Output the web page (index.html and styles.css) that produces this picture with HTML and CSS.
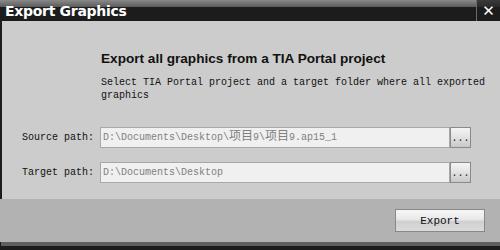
FILE: index.html
```html
<!DOCTYPE html>
<html lang="en">
<head>
    <meta charset="UTF-8">
    <title>Export Graphics</title>
    <link rel="stylesheet" href="styles.css">
</head>
<body>
    <div class="window">
        <div class="titlebar">
            <div class="title">Export Graphics</div>
            <div class="close">&#x2715;</div>
        </div>
        <div class="content">
            <div class="intro">
                <h2>Export all graphics from a TIA Portal project</h2>
                <p>Select TIA Portal project and a target folder where all exported graphics</p>
            </div>
            <div class="row">
                <label>Source path:</label>
                <div class="path">D:\Documents\Desktop\<span class="cjk">项目</span>9\<span class="cjk">项目</span>9.ap15_1</div>
                <button class="browse">...</button>
            </div>
            <div class="row">
                <label>Target path:</label>
                <div class="path">D:\Documents\Desktop</div>
                <button class="browse">...</button>
            </div>
        </div>
        <div class="footer">
            <button class="export">Export</button>
        </div>
        <div class="edge"></div>
    </div>
</body>
</html>
```

FILE: styles.css
```css
body { margin: 0; background: #1c1c1c; }
.window { width: 500px; height: 250px; display: flex; flex-direction: column; background: #1c1c1c; }

.titlebar { height: 21px; flex: none; display: flex; }
.title { flex: 1; padding-left: 5px; color: #fff; font: bold 14px "DejaVu Sans", sans-serif;
         line-height: 22px; letter-spacing: -0.3px;
         background: linear-gradient(#8a8a8a 0px, #5a5a5a 7px, #1c1c1c 7px); }
.close { width: 23px; border-left: 1px solid #6a6a6a; color: #fff; text-align: center;
         font: bold 15px "DejaVu Sans", sans-serif; line-height: 22px;
         background: linear-gradient(#3a3a3a 0px, #2a2a2a 7px, #1c1c1c 7px); }

.content { height: 178px; flex: none; margin-left: 2px; background: #cccccc; }
.intro { margin-left: 99px; padding-top: 30px; }
.intro h2 { margin: 0; font: bold 13.6px "Liberation Sans", sans-serif; line-height: 16px; color: #111; }
.intro p { margin: 9px 0 0; width: 390px; font: 10px "Liberation Mono", monospace; line-height: 13px; color: #111; }

.row { display: grid; grid-template-columns: 92px 350px 21px; column-gap: 6px; height: 21px; margin-top: 14px; }
.intro + .row { margin-top: 25px; }
.row label { text-align: right; font: 10px "Liberation Mono", monospace; line-height: 21px; color: #111; }
.path { box-sizing: border-box; height: 21px; border: 1px solid #a8a8a8; background: #f0f0f0; color: #808080;
        padding-left: 2px; font: 10px "Liberation Mono", monospace; line-height: 19px; white-space: nowrap; }
.cjk { font-family: "Noto Sans CJK SC", sans-serif; font-size: 12px; line-height: 1; }
.browse { box-sizing: border-box; height: 21px; width: 21px; margin-left: -6px; padding: 3px 0 0;
          border: 1px solid #8a8a8a; color: #222;
          background: linear-gradient(#f4f4f4, #e6e6e6 40%, #c8c8c8);
          font: 10px "Liberation Mono", monospace; line-height: 14px; }

.footer { height: 43px; flex: none; background: #b2b2b2; display: flex; justify-content: flex-end; align-items: flex-start; }
.export { margin: 10px 15px 0 0; width: 90px; height: 23px; padding: 0; border: 1px solid #888;
          background: linear-gradient(#f6f6f6, #e8e8e8 45%, #d0d0d0 55%, #dadada);
          font: 11px "Liberation Mono", monospace; color: #111; }
.edge { height: 4px; flex: none; margin-left: 1px; background: #5f5f5f; }
```
